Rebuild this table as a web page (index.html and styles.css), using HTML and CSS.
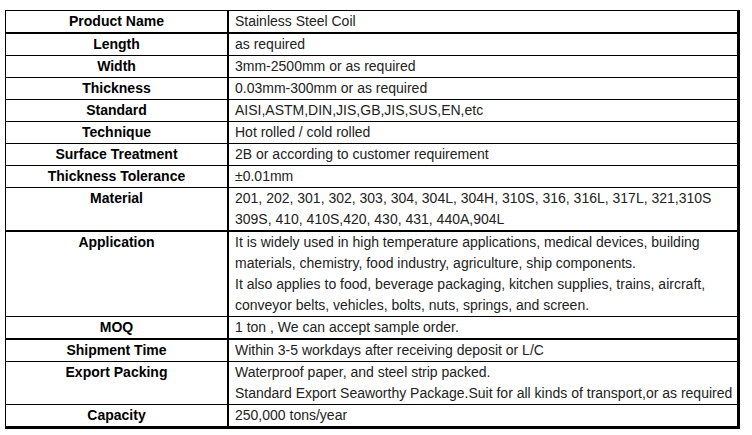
FILE: index.html
```html
<!DOCTYPE html>
<html>
<head>
<meta charset="utf-8">
<link rel="stylesheet" href="styles.css">
</head>
<body>
<div class="wrap">
<table class="spec">
<tr class="thick"><th>Product Name</th><td>Stainless Steel Coil</td></tr>
<tr><th>Length</th><td>as required</td></tr>
<tr><th>Width</th><td>3mm-2500mm or as required</td></tr>
<tr><th>Thickness</th><td>0.03mm-300mm or as required</td></tr>
<tr><th>Standard</th><td>AISI,ASTM,DIN,JIS,GB,JIS,SUS,EN,etc</td></tr>
<tr><th>Technique</th><td>Hot rolled / cold rolled</td></tr>
<tr><th>Surface Treatment</th><td>2B or according to customer requirement</td></tr>
<tr><th>Thickness Tolerance</th><td>±0.01mm</td></tr>
<tr class="thick"><th>Material</th><td>201, 202, 301, 302, 303, 304, 304L, 304H, 310S, 316, 316L, 317L, 321,310S<br>309S, 410, 410S,420, 430, 431, 440A,904L</td></tr>
<tr><th>Application</th><td>It is widely used in high temperature applications, medical devices, building<br>materials, chemistry, food industry, agriculture, ship components.<br>It also applies to food, beverage packaging, kitchen supplies, trains, aircraft,<br>conveyor belts, vehicles, bolts, nuts, springs, and screen.</td></tr>
<tr class="thick"><th>MOQ</th><td>1 ton , We can accept sample order.</td></tr>
<tr><th>Shipment Time</th><td>Within 3-5 workdays after receiving deposit or L/C</td></tr>
<tr><th>Export Packing</th><td>Waterproof paper, and steel strip packed.<br>Standard Export Seaworthy Package.Suit for all kinds of transport,or as required</td></tr>
<tr><th>Capacity</th><td>250,000 tons/year</td></tr>
</table>
</div>
</body>
</html>
```
FILE: styles.css
```css
html, body {
  margin: 0;
  padding: 0;
  background: #fff;
}
.wrap {
  padding: 10px 0 0 5px;
}
.spec {
  border-collapse: collapse;
  width: 735px;
  font-family: "Liberation Sans", Arial, sans-serif;
  font-size: 14px;
  line-height: 21px;
  border-top: 1px solid #000;
  border-left: 1px solid #000;
  border-right: 3px solid #000;
  border-bottom: 3px solid #000;
}
.spec th, .spec td {
  border: 1px solid #000;
  padding: 0;
  vertical-align: top;
}
.spec th {
  width: 221px;
  font-weight: bold;
  text-align: center;
  color: #000;
  border-right-width: 2px;
}
.spec td {
  padding-left: 6px;
  text-align: left;
  color: #222;
  white-space: nowrap;
}
.spec tr.thick th, .spec tr.thick td {
  border-bottom-width: 2px;
}
```
